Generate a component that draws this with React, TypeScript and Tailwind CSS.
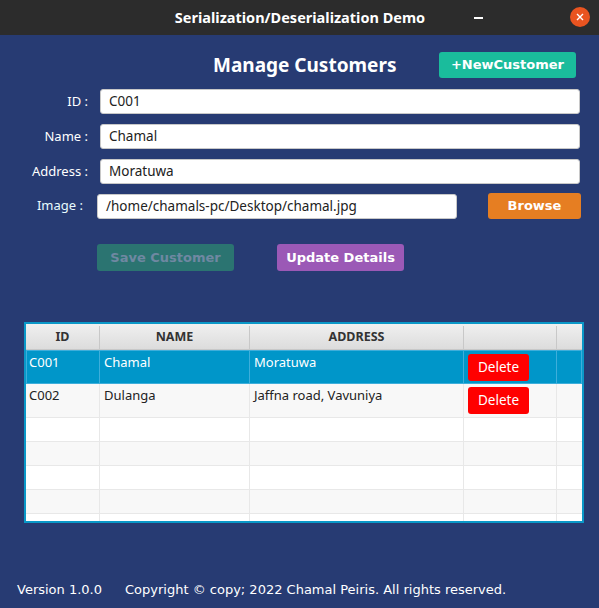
const rows = [
  { id: "C001", name: "Chamal", address: "Moratuwa", selected: true },
  { id: "C002", name: "Dulanga", address: "Jaffna road, Vavuniya", selected: false },
];

const App = () => {
  return (
    <div className="w-[599px] h-[608px] flex flex-col bg-[#273b73] font-['Noto_Sans',sans-serif] overflow-hidden">
      {/* Title bar */}
      <div className="h-[35px] shrink-0 bg-[#2c2c2c] flex items-center relative">
        <div className="flex-1 text-center text-white font-bold text-[14.5px] pl-[1px]">
          Serialization/Deserialization Demo
        </div>
        <div className="absolute left-[474px] top-[17px] w-[9px] h-[1.5px] bg-white"></div>
        <div className="absolute left-[570px] top-[7px] w-[20px] h-[20px] rounded-full bg-[#e95420] flex items-center justify-center">
          <svg width="8" height="8" viewBox="0 0 8 8">
            <path d="M1 1L7 7M7 1L1 7" stroke="white" strokeWidth="1.4" />
          </svg>
        </div>
      </div>

      {/* Header */}
      <div className="flex items-center mt-[17px] h-[26px]">
        <h1 className="ml-[213px] text-white font-bold text-[19px] leading-none mt-[1px]">
          Manage Customers
        </h1>
        <button className="ml-auto mr-[23px] w-[137px] h-[26px] rounded-[3px] bg-[#1abc9c] text-white font-bold text-[13px] font-['DejaVu_Sans',sans-serif]">
          +NewCustomer
        </button>
      </div>

      {/* Form */}
      <div className="flex flex-col mt-[11px]">
        {[
          ["ID :", "C001"],
          ["Name :", "Chamal"],
          ["Address :", "Moratuwa"],
        ].map(([label, value], i) => (
          <div key={label} className={`flex items-center h-[25px] ${i > 0 ? "mt-[10px]" : ""}`}>
            <div className="w-[88px] text-right text-white text-[13px]">{label}</div>
            <div className="ml-[12px] w-[480px] h-[25px] bg-white rounded-[3px] border border-[#c8c8c8] flex items-center pl-[8px] text-[13.5px] text-[#222]">
              {value}
            </div>
          </div>
        ))}
        <div className="flex items-center h-[26px] mt-[9px]">
          <div className="w-[83px] text-right text-[#e8fbff] text-[13px]">Image :</div>
          <div className="ml-[14px] w-[360px] h-[25px] bg-white rounded-[3px] border border-[#c8c8c8] flex items-center pl-[8px] text-[13.5px] text-[#222]">
            /home/chamals-pc/Desktop/chamal.jpg
          </div>
          <button className="ml-[31px] w-[93px] h-[26px] rounded-[3px] bg-[#e67e22] text-white font-bold text-[13px] font-['DejaVu_Sans',sans-serif]">
            Browse
          </button>
        </div>
      </div>

      {/* Actions */}
      <div className="flex mt-[25px] ml-[97px] gap-[43px]">
        <button className="w-[137px] h-[27px] rounded-[3px] bg-[#2b7471] text-[#6f88a2] font-bold text-[13px] font-['DejaVu_Sans',sans-serif]">
          Save Customer
        </button>
        <button className="w-[127px] h-[27px] rounded-[3px] bg-[#9b59b6] text-white font-bold text-[13px] font-['DejaVu_Sans',sans-serif]">
          Update Details
        </button>
      </div>

      {/* Table */}
      <div className="mt-[51px] ml-[24px] w-[560px] h-[201px] border-2 border-[#0a98c8] bg-white overflow-hidden">
        <div className="flex h-[26px] pt-[2px] bg-gradient-to-b from-[#f0f0f0] to-[#dcdcdc] border-b border-[#c8c8c8] text-[12.5px] font-bold text-[#333]">
          <div className="w-[74px] border-r border-[#c8c8c8] flex items-center justify-center">ID</div>
          <div className="w-[150px] border-r border-[#c8c8c8] flex items-center justify-center">NAME</div>
          <div className="w-[214px] border-r border-[#c8c8c8] flex items-center justify-center">ADDRESS</div>
          <div className="w-[93px] border-r border-[#c8c8c8]"></div>
          <div className="flex-1"></div>
        </div>
        {rows.map((r) => (
          <div
            key={r.id}
            className={`flex h-[34px] text-[13px] ${
              r.selected
                ? "bg-[#0096c9] text-white border border-[#3eaedb]"
                : "bg-[#f8f8f8] text-[#222] border-b border-[#e8e8e8]"
            }`}
          >
            <div className={`w-[74px] pl-[3px] pt-[2px] border-r ${r.selected ? "border-[#3eaedb] -ml-[1px]" : "border-[#e8e8e8]"}`}>{r.id}</div>
            <div className={`w-[150px] pl-[4px] pt-[2px] border-r ${r.selected ? "border-[#3eaedb]" : "border-[#e8e8e8]"}`}>{r.name}</div>
            <div className={`w-[214px] pl-[4px] pt-[2px] border-r ${r.selected ? "border-[#3eaedb]" : "border-[#e8e8e8]"}`}>{r.address}</div>
            <div className={`w-[93px] pl-[4px] pt-[3px] border-r ${r.selected ? "border-[#3eaedb]" : "border-[#e8e8e8]"}`}>
              <button className="w-[61px] h-[27px] rounded-[3px] bg-[#ff0000] text-white text-[13.5px]">Delete</button>
            </div>
            <div className="flex-1"></div>
          </div>
        ))}
        {[0, 1, 2, 3, 4].map((i) => (
          <div key={i} className={`flex h-[24px] border-b border-[#e8e8e8] ${i % 2 === 1 ? "bg-[#f8f8f8]" : "bg-white"}`}>
            <div className="w-[74px] border-r border-[#e8e8e8]"></div>
            <div className="w-[150px] border-r border-[#e8e8e8]"></div>
            <div className="w-[214px] border-r border-[#e8e8e8]"></div>
            <div className="w-[93px] border-r border-[#e8e8e8]"></div>
            <div className="flex-1"></div>
          </div>
        ))}
      </div>

      {/* Footer */}
      <div className="mt-auto mb-[9px] flex text-white text-[13px] font-['DejaVu_Sans',sans-serif] ml-[17px]">
        <span>Version 1.0.0</span>
        <span className="ml-[23px]">Copyright © copy; 2022 Chamal Peiris. All rights reserved.</span>
      </div>
    </div>
  );
};

export default App;
